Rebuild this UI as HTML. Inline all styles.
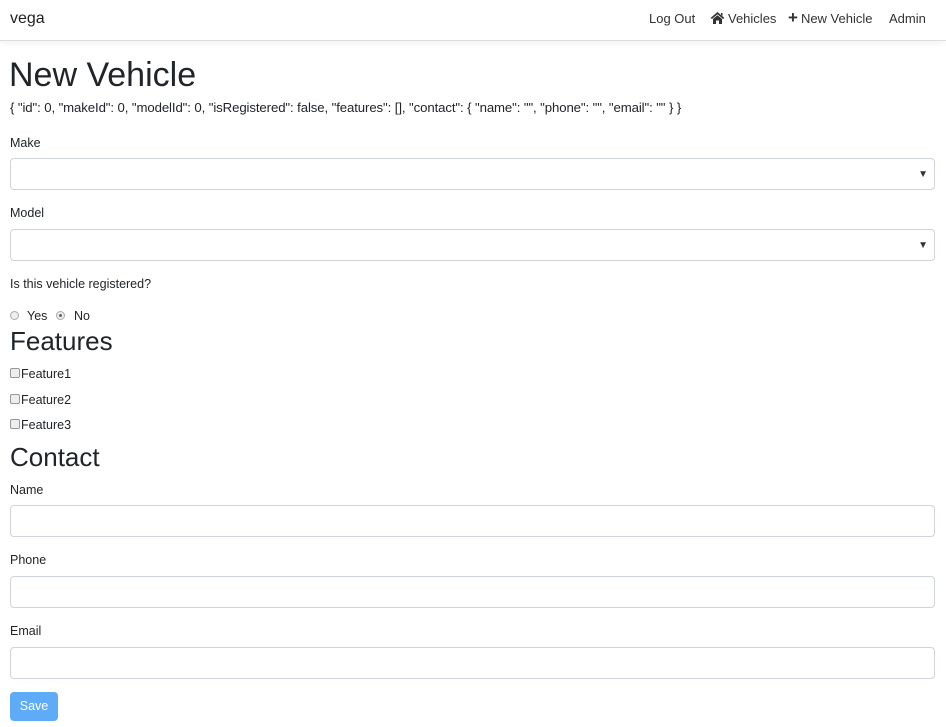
<!DOCTYPE html>
<html><head><style>
body{margin:0;width:946px;height:727px;background:#fff;font-family:"Liberation Sans",sans-serif;color:#212529;position:relative;overflow:hidden}
.a{position:absolute;white-space:nowrap}
.nav{position:absolute;left:0;top:0;width:946px;height:40px;border-bottom:1px solid #ddd;box-shadow:0 2px 6px rgba(0,0,0,.06)}
.l{font-size:12.5px}
.in{position:absolute;left:10px;width:923px;height:30px;border:1px solid #ced4da;border-radius:4px;background:#fff}
.ar{position:absolute;right:6px;top:10px;font-size:10px;color:#333}
.cb{display:inline-block;width:8px;height:8px;border:1px solid #999;border-radius:2px;background:#eee;margin-right:1px;vertical-align:0}
.rd{position:absolute;width:7px;height:7px;border:1px solid #aaa;border-radius:50%;background:#eee}
</style></head><body>
<div class="nav">
<div class="a" style="left:10px;top:10px;font-size:16px;color:#222">vega</div>
<div class="a" style="left:649px;top:11px;font-size:13px;color:#333">Log Out</div>
<svg class="a" style="left:710px;top:11px" width="15" height="13" viewBox="0 0 15 13"><path d="M7.5 1 L0.5 7 L2 8 L7.5 3.3 L13 8 L14.5 7 Z M3 8 L7.5 4.3 L12 8 V13 H9 V9.5 H6 V13 H3 Z M11 2 H12.5 V5 L11 3.8 Z" fill="#333"/></svg>
<div class="a" style="left:728px;top:11px;font-size:13px;color:#333">Vehicles</div>
<div class="a" style="left:788px;top:11px;font-size:13px;color:#333"><b style="font-size:17px;line-height:13px;margin-right:3px">+</b>New Vehicle</div>
<div class="a" style="left:889px;top:11px;font-size:13px;color:#333">Admin</div>
</div>
<div class="a" style="left:9px;top:56px;font-size:34px">New Vehicle</div>
<div class="a" style="left:10px;top:100px;font-size:13.2px;letter-spacing:-0.1px">{ "id": 0, "makeId": 0, "modelId": 0, "isRegistered": false, "features": [], "contact": { "name": "", "phone": "", "email": "" } }</div>
<div class="a l" style="left:10px;top:136px">Make</div>
<div class="in" style="top:158px"><span class="ar">▼</span></div>
<div class="a l" style="left:10px;top:206px">Model</div>
<div class="in" style="top:229px"><span class="ar">▼</span></div>
<div class="a l" style="left:10px;top:277px">Is this vehicle registered?</div>
<div class="rd" style="left:10px;top:311px"></div>
<div class="a l" style="left:27px;top:309px">Yes</div>
<div class="rd" style="left:56px;top:311px"><div style="width:3px;height:3px;background:#666;border-radius:50%;margin:2px"></div></div>
<div class="a l" style="left:74px;top:309px">No</div>
<div class="a" style="left:10px;top:326px;font-size:26px">Features</div>
<div class="a l" style="left:10px;top:367px"><span class="cb"></span>Feature1</div>
<div class="a l" style="left:10px;top:393px"><span class="cb"></span>Feature2</div>
<div class="a l" style="left:10px;top:418px"><span class="cb"></span>Feature3</div>
<div class="a" style="left:10px;top:442px;font-size:26px">Contact</div>
<div class="a l" style="left:10px;top:483px">Name</div>
<div class="in" style="top:505px"></div>
<div class="a l" style="left:10px;top:553px">Phone</div>
<div class="in" style="top:576px"></div>
<div class="a l" style="left:10px;top:624px">Email</div>
<div class="in" style="top:647px"></div>
<div class="a" style="left:10px;top:692px;width:48px;height:29px;background:#5eabf7;border-radius:4px;color:#fff;font-size:12.5px;text-align:center;line-height:29px">Save</div>
</body></html>
